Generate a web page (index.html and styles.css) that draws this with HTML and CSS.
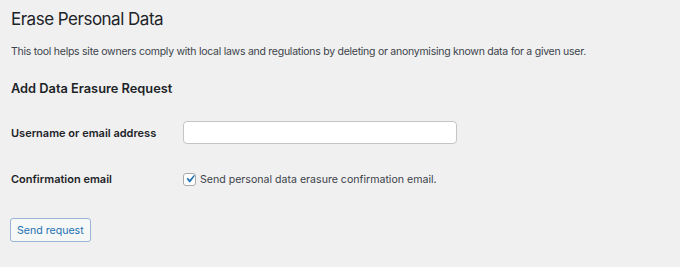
FILE: index.html
```html
<!DOCTYPE html>
<html lang="en">
<head>
<meta charset="utf-8">
<title>Erase Personal Data</title>
<link rel="stylesheet" href="styles.css">
</head>
<body>
<div class="wrap">
  <h1 class="title">Erase Personal Data</h1>
  <p class="desc">This tool helps site owners comply with local laws and regulations by deleting or anonymising known data for a given user.</p>
  <h2 class="subtitle">Add Data Erasure Request</h2>
  <form class="form">
    <div class="row row-input">
      <label class="label" for="user">Username or email address</label>
      <input class="text-input" id="user" type="text">
    </div>
    <div class="row row-check">
      <span class="label">Confirmation email</span>
      <label class="check-label">
        <span class="checkbox">
          <svg viewBox="0 0 20 20" width="16" height="16"><path d="M14.83 4.89l1.34.94-5.81 8.38H9.02L5.78 9.67l1.34-1.25 2.57 2.4z" fill="#2271b1"/></svg>
        </span>
        Send personal data erasure confirmation email.
      </label>
    </div>
    <div class="actions">
      <button class="button" type="button">Send request</button>
    </div>
  </form>
</div>
</body>
</html>
```
FILE: styles.css
```css
html, body {
  margin: 0;
  padding: 0;
  background: #f0f0f1;
}
body {
  font-family: Inter, "Noto Sans", sans-serif;
  color: #3c434a;
  font-size: 11px;
}
.wrap {
  padding: 0 11px;
}
.title {
  margin: 0;
  padding-top: 8px;
  font-size: 17px;
  font-weight: 400;
  letter-spacing: -0.5px;
  line-height: 22px;
  color: #1d2327;
}
.desc {
  margin: 14px 0 0;
  font-size: 10.5px;
  letter-spacing: -0.26px;
  line-height: 16px;
}
.subtitle {
  margin: 20px 0 0;
  font-size: 12.8px;
  font-weight: 600;
  line-height: 18px;
  color: #1d2327;
}
.row {
  display: flex;
  align-items: center;
}
.row-input {
  margin-top: 23px;
}
.row-check {
  margin-top: 28px;
}
.label {
  width: 172px;
  font-weight: 600;
  color: #1d2327;
  font-size: 11px;
}
.text-input {
  width: 274px;
  height: 23px;
  box-sizing: border-box;
  border: 1px solid #c3c4c7;
  border-radius: 4px;
  background: #fff;
  margin: 0;
  padding: 0 6px;
}
.check-label {
  display: flex;
  align-items: center;
  gap: 4px;
  font-size: 10.6px;
  color: #3c434a;
}
.checkbox {
  width: 13px;
  height: 13px;
  border: 1px solid #a7aaad;
  border-radius: 3px;
  background: #fff;
  display: flex;
  align-items: center;
  justify-content: center;
  box-sizing: border-box;
  overflow: visible;
}
.checkbox svg {
  flex: none;
}
.actions {
  margin-top: 32px;
}
.button {
  margin: 0 0 0 -1px;
  height: 24px;
  padding: 0 6px;
  font-family: inherit;
  font-size: 10.6px;
  color: #2271b1;
  background: #f6f7f7;
  border: 1px solid #9ab4d6;
  border-radius: 3px;
}
```
